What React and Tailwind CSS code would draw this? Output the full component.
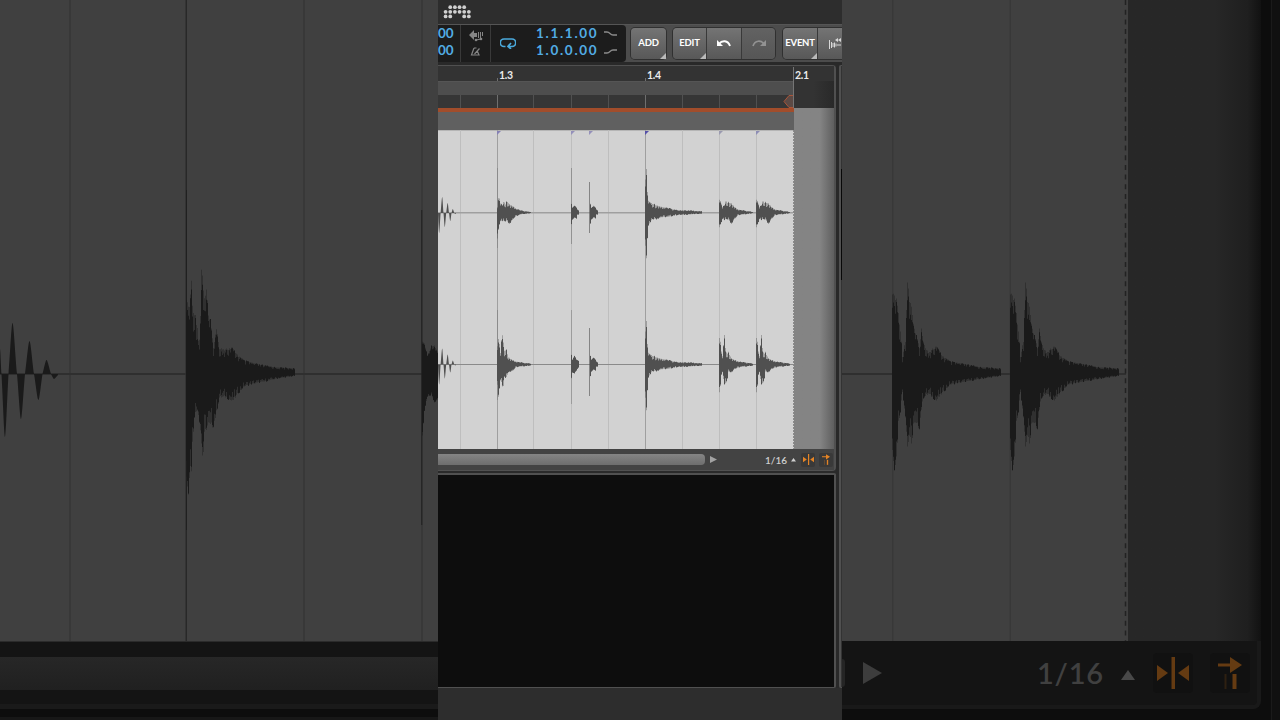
// ---------------------------------------------------------------------------
// Audio clip editor: transport bar, ruler, stereo waveform and footer,
// framed by an enlarged, dimmed view of the same clip on both sides.
// ---------------------------------------------------------------------------

// Envelopes are lists of [x, height above the axis, depth below the axis].
const SINE = [[0, 0, 6], [1.2, 0, 20], [2.6, 0, 0], [4.2, 16, 0], [5.5, 0, 0], [6.8, 0, 14], [8.2, 0, 0], [9.7, 10, 0], [11, 0, 0], [12.3, 0, 8], [13.5, 0, 0], [14.8, 4, 0], [16.3, 0, 0], [17.3, 0, 1], [18, 0, 0]];
const SNARE_TOP = [[0, 6, 28], [0.8, 15, 19], [2, 15, 12], [3, 10, 9], [5, 8, 9], [6.5, 13, 9], [8, 9, 9], [9.5, 13, 9], [12, 9, 12], [15, 7, 8], [19, 4, 4], [24, 2, 2], [30, 1, 1], [34, 0.5, 0.5]];
const SNARE_BOTTOM = [[0, 20, 22], [0.8, 28, 35], [2, 22, 24], [3.2, 11, 15], [4.5, 34, 22], [6, 24, 24], [7, 16, 13], [9, 16, 14], [11, 8, 8], [15, 5, 7], [19, 3, 3], [25, 2, 2], [34, 1, 1]];
const HAT_TOP = [[0, 9, 12], [1, 5, 7], [3, 7, 5], [5, 5, 6], [6, 3, 2], [7.5, 2, 2], [8, 1, 4]];
const HAT_BOTTOM = [[0, 10, 14], [1, 5, 8], [3, 9, 9], [5, 5, 6], [7, 4, 3], [8, 1, 1]];
const KICK = [[0, 36, 36], [1, 46, 47], [2, 22, 26], [3, 13, 14], [4, 11, 12], [7, 10, 7], [11, 8, 7], [16, 6, 5], [22, 5, 5], [30, 3, 3], [40, 2.4, 2.4], [57, 1.2, 1.2]];
const CLAP_TOP = [[0, 14, 16], [1.2, 12, 12], [3, 6, 7], [5, 8, 8], [6.5, 14, 7], [8, 11, 7], [10, 11, 9], [12, 10, 12], [15, 6, 7], [19, 3, 3], [25, 2, 2], [34, 0.5, 0.5]];
const CLAP_BOTTOM = [[0, 29, 30], [1, 24, 22], [2, 14, 10], [3, 9, 8], [4, 20, 16], [5, 31, 21], [6, 18, 21], [7.5, 12, 17], [9, 13, 8], [12, 7, 8], [15, 5, 5], [20, 3, 3], [34, 1, 1]];

const SIDE_SINE = [[0, 25, 0], [1.500, 0, 0], [5, 0, 63], [8.500, 0, 0], [12.5, 51, 0], [17, 0, 0], [21, 0, 45], [25, 0, 0], [29.5, 33, 0], [34, 0, 0], [38.5, 0, 26], [42.500, 0, 0], [46.5, 14, 0], [51, 0, 0], [54, 0, 5], [58, 0, 1]];
const SIDE_SNARE = [[0, 78, 110], [2, 70, 122], [3.5, 72, 100], [5, 96, 100], [6, 72, 75], [8, 64, 45], [11, 50, 38], [12.500, 26, 46], [14, 60, 60], [15, 112, 75], [16.5, 96, 92], [18, 80, 66], [20, 88, 58], [22, 60, 54], [24, 54, 56], [27, 28, 55], [30, 46, 42], [33, 27, 26], [39, 25, 25], [46, 26, 30], [52, 18, 21], [58, 13, 14], [68, 10, 11], [78, 8, 9], [90, 6, 6], [109, 5, 3]];
const SIDE_CLAP = [[0, 84, 82], [2, 82, 98], [4, 76, 90], [6, 64, 52], [8, 46, 40], [10, 18, 20], [13, 35, 45], [15, 98, 78], [17, 78, 66], [19, 72, 78], [21, 50, 54], [24, 38, 55], [27, 28, 57], [29, 46, 38], [31, 32, 26], [36, 22, 22], [44, 28, 29], [50, 18, 21], [58, 12, 12], [74, 9, 9], [90, 6, 6], [109, 5, 3]];
const SIDE_HAT = [[0, 32, 64], [2, 30, 38], [5, 18, 24], [9, 28, 22], [12, 28, 30], [16, 20, 26]];

function sample(env, x) {
  let i = 1;
  while (i < env.length - 1 && env[i][0] < x) i++;
  const [x0, u0, d0] = env[i - 1];
  const [x1, u1, d1] = env[i];
  const t = (x - x0) / (x1 - x0);
  return [u0 + (u1 - u0) * t, d0 + (d1 - d0) * t];
}

function noise(n) {
  const v = Math.sin(n * 12.9898) * 43758.5453;
  return v - Math.floor(v);
}

// One bar per pixel column. "rough" pulls columns towards the axis.
function columns(env, x, y, rough) {
  const end = env[env.length - 1][0];
  let d = "";
  for (let i = 0; i < end; i++) {
    const [up, down] = sample(env, i);
    const a = 1 - rough * noise(i + 3);
    const b = 1 - rough * noise(i + 71);
    const top = y - up * a;
    d += `M${x + i} ${top.toFixed(1)}h1V${(y + down * b).toFixed(1)}h-1z`;
  }
  return d;
}

function Burst({ env, x, y, rough = 0.5 }) {
  return (
    <g>
      <path d={columns(env, x, y, rough * 0.3)} opacity="0.4" />
      <path d={columns(env, x, y, rough)} />
    </g>
  );
}

// Rounded lobes for the low, pitched tail.
function Lobes({ env, x, y }) {
  let d = `M${x} ${y - env[0][1]}`;
  for (let i = 1; i < env.length; i++) {
    const [x0, u0, d0] = env[i - 1];
    const [x1, u1, d1] = env[i];
    const y0 = y - u0 + d0;
    const y1 = y - u1 + d1;
    const rising = Math.abs(y1 - y) > Math.abs(y0 - y);
    const w = x1 - x0;
    d += rising
      ? `C${x + x0 + w * 0.4} ${y0 + (y1 - y0) * 0.4} ${x + x1 - w * 0.25} ${y1} ${x + x1} ${y1}`
      : `C${x + x0 + w * 0.25} ${y0} ${x + x1 - w * 0.4} ${y1 - (y1 - y0) * 0.4} ${x + x1} ${y1}`;
  }
  return <path d={`${d}V${y}H${x}Z`} />;
}

function Magnet({ className }) {
  return (
    <svg viewBox="0 0 32 32" className={className} fill="currentColor">
      <path d="M0 8l11 8L0 24zM32 8l-11 8 11 8z" />
      <rect x="14.5" y="0" width="3.500" height="32" />
    </svg>
  );
}

function Follow({ className }) {
  return (
    <svg viewBox="0 0 24 32" className={className} fill="currentColor">
      <path d="M0 6.500h12V0l12 8-12 8V9.500H0z" />
      <rect x="14.500" y="17" width="4" height="15" />
      <rect x="6.500" y="17" width="2" height="15" opacity="0.35" />
    </svg>
  );
}

function LeftBackdrop() {
  return (
    <div className="w-[438px] h-full flex flex-col shrink-0 bg-[#141414]">
      <svg width="438" height="641" className="block bg-[#404040]">
        <g fill="#383838">
          <rect x="69" width="2" height="641" />
          <rect x="303" width="2" height="641" />
          <rect x="421" width="2" height="641" />
        </g>
        <rect x="185.500" width="1.500" height="641" fill="#282828" />
        <rect y="373" width="438" height="2" fill="#2f2f2f" />
        <g fill="#1a1a1a">
          <rect x="186" y="190" width="1" height="340" opacity="0.6" />
          <rect x="421" y="210" width="1.300" height="315" opacity="0.6" />
          <Lobes env={SIDE_SINE} x={0} y={374} />
          <Burst env={SIDE_SNARE} x={186} y={373} rough={0.4} />
          <Burst env={SIDE_HAT} x={422} y={373} rough={0.15} />
        </g>
      </svg>
      <div className="h-4 border-t border-[#2b2b2b]" />
      <div className="h-[33px] bg-linear-to-b from-[#272727] to-[#202020]" />
      <div className="h-[14px]" />
      <div className="h-[5px] bg-[#1a1a1a]" />
      <div className="h-2 bg-[#0d0d0d]" />
      <div className="flex-1 bg-[#171717]" />
    </div>
  );
}

function RightBackdrop() {
  return (
    <div className="w-[438px] h-full flex shrink-0 bg-[#0d0d0d]">
      <div className="w-[419px] flex flex-col">
        <div className="flex h-[641px]">
          <svg width="286" height="641" className="block bg-[#404040]">
            <g fill="#383838">
              <rect x="50" width="1.500" height="641" />
              <rect x="167.500" width="1.500" height="641" />
            </g>
            <rect y="373" width="284" height="2" fill="#2f2f2f" />
            <g fill="#1a1a1a">
              <Burst env={SIDE_CLAP} x={50} y={373} rough={0.4} />
              <Burst env={SIDE_CLAP} x={168} y={373} rough={0.4} />
            </g>
            <path d="M283.500 0V641" stroke="#222222" strokeWidth="1.500" strokeDasharray="5 4.700" />
          </svg>
          <div className="flex-1 bg-linear-to-r from-[#272727] from-65% via-[#1f1f1f] via-90% to-[#121212]" />
        </div>
        <div className="h-[68px] flex items-center rounded-br-lg border-r-4 border-b-4 border-[#191919] bg-[#141414]">
          <div className="w-[3px] h-7 rounded-r-md bg-[#252525]" />
          <svg viewBox="0 0 20 22" className="w-5 h-[22px] ml-[18px]" fill="#3d3d3d">
            <path d="M0 0l19 11L0 22z" />
          </svg>
          <span className="w-[66px] ml-[154px] text-[29px] leading-8 font-semibold tracking-[0.8px] whitespace-nowrap text-[#404040]">1/16</span>
          <svg viewBox="0 0 14 10" className="w-[14px] h-[10px] mt-1 ml-[18px]" fill="#484848">
            <path d="M7 0l7 10H0z" />
          </svg>
          <div className="size-10 ml-[18px] flex items-center justify-center rounded bg-[#111111]">
            <Magnet className="size-8 text-[#653b12]" />
          </div>
          <div className="size-10 ml-[17px] flex items-center justify-center rounded bg-[#111111]">
            <Follow className="w-6 h-8 text-[#653b12]" />
          </div>
        </div>
      </div>
      <div className="flex-1 flex justify-end">
        <div className="w-[9px] h-full border-l border-[#1a1a1a] bg-[#101010]" />
      </div>
    </div>
  );
}

const LOGO_ROWS = [
  [1, 2, 3, 4],
  [0, 1, 2, 3, 4, 5],
  [0, 1, 4, 5],
];

function Logo() {
  return (
    <svg width="28" height="14" fill="#d0d0d0">
      {LOGO_ROWS.map((row, r) =>
        row.map((c) => (
          <circle key={`${r}-${c}`} cx={2.6 + c * 4.65} cy={2.2 + r * 4.6} r="1.9" />
        ))
      )}
    </svg>
  );
}

function ToolButton({ children, className, menu }) {
  return (
    <button
      className={`relative h-[31px] flex items-center justify-center shrink-0 bg-linear-to-b from-[#747474] to-[#585858] text-[9.5px] font-bold tracking-tight text-white ${className}`}
    >
      {children}
      {menu && (
        <svg width="6" height="6" className="absolute right-0 bottom-0" fill="#b9b9b9">
          <path d="M6 0v6H0z" />
        </svg>
      )}
    </button>
  );
}

function Transport() {
  return (
    <div className="w-[188px] h-[37px] flex shrink-0 rounded-r bg-[#1c1c1c] text-[13.5px] leading-[17px] font-bold text-[#52ace4]">
      <div className="w-[22px] pb-[3px] flex flex-col justify-center">
        <span>00</span>
        <span>00</span>
      </div>
      <div className="w-[31px] flex flex-col items-center justify-center gap-[5px] pb-px border-x border-[#393939]">
        <svg width="14" height="12" fill="#858585">
          <path d="M0 5l5-5v3h3v4H5v3zM9 2h1v6H9zM11 2h1v6h-1zM13 2h1v4h-1z" />
          <circle cx="7" cy="10" r="1.300" />
          <circle cx="12" cy="9" r="1.300" />
          <path d="M7 9.500l5-1v1l-5 1z" />
        </svg>
        <svg width="11" height="9" fill="none" stroke="#858585" strokeWidth="1.200">
          <path d="M4 1L1.500 8H9L7.500 4.500M4 1h2.500M4.500 7l5-5.500" />
        </svg>
      </div>
      <div className="w-8 flex items-center justify-center pl-px pb-[2px]">
        <svg width="16" height="12" fill="none" stroke="#4aa9dc" strokeWidth="1.700">
          <path d="M5.500 9.500H4A3.500 3.500 0 0 1 4 2h8a3.500 3.500 0 0 1 0 7.500H8.500M11 6l-3 3.500 3 2.500" />
        </svg>
      </div>
      <div className="w-[67px] ml-[13px] pb-[3px] flex flex-col justify-center tracking-[1.7px] whitespace-nowrap">
        <span>1.1.1.00</span>
        <span>1.0.0.00</span>
      </div>
      <div className="flex flex-col justify-center gap-[13px] ml-[1px] pb-[2px]">
        <svg width="13" height="5" fill="none" stroke="#8a8a8a" strokeWidth="1.400">
          <path d="M0 1h3c3 0 3 3 6 3h4" />
        </svg>
        <svg width="13" height="5" fill="none" stroke="#8a8a8a" strokeWidth="1.400">
          <path d="M0 4h3c3 0 3-3 6-3h4" />
        </svg>
      </div>
    </div>
  );
}

function Toolbar() {
  return (
    <div className="h-[38px] flex items-center shrink-0 border-t border-[#555555] bg-[#4c4c4c]">
      <Transport />
      <ToolButton menu className="w-[35px] ml-[5px] rounded ring-1 ring-[#303030]">ADD</ToolButton>
      <div className="flex shrink-0 ml-[7px] rounded ring-1 ring-[#303030]">
        <ToolButton menu className="w-[34px] rounded-l border-r border-[#393939]">EDIT</ToolButton>
        <ToolButton className="w-[35px] border-r border-[#393939]">
          <svg width="16" height="9" fill="none" stroke="#ffffff" strokeWidth="1.900">
            <path d="M3 5c3-4 9-4 11 2" />
            <path d="M1 1v6h6z" fill="#ffffff" stroke="none" />
          </svg>
        </ToolButton>
        <ToolButton className="w-[33px] rounded-r from-[#626262]! to-[#565656]!">
          <svg width="16" height="9" fill="none" stroke="#929292" strokeWidth="1.700">
            <path d="M13 5C10 1 4 1 2 7" />
            <path d="M15 1v6H9z" fill="#929292" stroke="none" />
          </svg>
        </ToolButton>
      </div>
      <div className="flex shrink-0 ml-2 rounded-l ring-1 ring-[#303030]">
        <ToolButton menu className="w-[35px] rounded-l border-r border-[#393939]">EVENT</ToolButton>
        <ToolButton className="w-10 justify-start! pl-[11px]">
          <svg width="14" height="12" fill="#d8d8d8">
            <path d="M0 2h1v9H0zM2 4h1v6H2zM3.500 5h1v4h-1zM5 4.500h1v5H5zM6.500 5.500h1v3h-1zM8 6.500h4v1H8zM6 2l3-2v4zM9 2l3-2v4z" />
          </svg>
        </ToolButton>
      </div>
    </div>
  );
}

const BEATS = [59, 207];
const GRID = [22, 59, 95, 133, 170, 207, 244, 281, 318];

function Ruler() {
  return (
    <div className="relative h-[42px] shrink-0 text-[10.5px] leading-4 font-bold tracking-tight text-[#ececec]">
      <div className="h-[15px] bg-[#333333]" />
      <div className="flex">
        <div className="w-[355px]">
          <div className="h-[14px] border-t border-[#555555] bg-[#4e4e4e]" />
          <div className="h-[13px] bg-[#363636]" />
        </div>
        <div className="flex-1 h-[27px] bg-linear-to-r from-[#333333] from-50% to-[#292929]" />
      </div>
      <svg width="396" height="42" className="absolute inset-0">
        {GRID.map((x) => (
          <rect key={x} x={x} y="29" width="1" height="13" fill="#505050" />
        ))}
        {BEATS.map((x) => (
          <g key={x} fill="#6f6f6f">
            <rect x={x} y="12" width="1" height="3" />
            <rect x={x} y="29" width="1" height="13" />
          </g>
        ))}
        <rect x="355" y="1" width="1" height="41" fill="#757575" />
        <path d="M355 29.500h-4l-5 6 5 6h4" fill="#5c4a45" stroke="#a9553a" />
      </svg>
      <span className="absolute left-[61px] top-px">1.3</span>
      <span className="absolute left-[209px] top-px">1.4</span>
      <span className="absolute left-[357px] top-px">2.1</span>
    </div>
  );
}

const ONSETS = [
  { x: 59, color: "#8580b5" },
  { x: 133, color: "#9490ba" },
  { x: 151, color: "#9490ba" },
  { x: 207, color: "#5550a8" },
  { x: 281, color: "#9a9ab0" },
  { x: 318, color: "#8d8db5" },
];

function Waveform() {
  return (
    <div className="flex flex-1">
      <div className="w-[356px]">
        <div className="h-1 bg-[#a24d2b]" />
        <div className="h-[18px] bg-[#606060]" />
        <svg width="356" height="319" className="block bg-[#d2d2d2]">
          <rect width="356" height="1" fill="#b5b5b5" />
          {GRID.map((x) => (
            <rect key={x} x={x} width="1" height="319" fill="#bebebe" />
          ))}
          {BEATS.map((x) => (
            <rect key={x} x={x} width="1" height="319" fill="#9f9f9f" />
          ))}
          {ONSETS.map((o) => (
            <path key={o.x} d={`M${o.x} 1h4l-4 4z`} fill={o.color} />
          ))}
          <rect y="82" width="355" height="1.500" fill="#9f9f9f" />
          <rect y="234" width="355" height="1" fill="#8a8a8a" />
          <g fill="#505050">
            <rect x="59" y="38" width="1" height="80" opacity="0.25" />
            <rect x="133" y="38" width="1" height="76" opacity="0.4" />
            <rect x="151" y="52" width="1" height="51" opacity="0.6" />
            <rect x="59" y="180" width="1" height="90" opacity="0.25" />
            <rect x="133" y="180" width="1" height="94" opacity="0.3" />
            <rect x="151" y="198" width="1" height="68" opacity="0.6" />
            <Lobes env={SINE} x={0} y={83} />
            <Burst env={SNARE_TOP} x={59} y={82.5} />
            <Burst env={HAT_TOP} x={133} y={82.5} rough={0.1} />
            <Burst env={HAT_TOP} x={152} y={82.5} rough={0.2} />
            <Burst env={KICK} x={207} y={82.5} />
            <Burst env={CLAP_TOP} x={281} y={82.5} />
            <Burst env={CLAP_TOP} x={318} y={82.5} />
            <Lobes env={SINE} x={0} y={234.5} />
            <Burst env={SNARE_BOTTOM} x={59} y={234.5} />
            <Burst env={HAT_BOTTOM} x={133} y={234.5} rough={0.1} />
            <Burst env={HAT_TOP} x={152} y={234.5} rough={0.1} />
            <Burst env={KICK} x={207} y={234.5} />
            <Burst env={CLAP_BOTTOM} x={281} y={234.5} />
            <Burst env={CLAP_BOTTOM} x={318} y={234.5} />
          </g>
          <path d="M355.500 0V319" stroke="#8a8a8a" strokeDasharray="2 1" />
        </svg>
      </div>
      <div className="flex-1 bg-linear-to-r from-[#848484] from-65% to-[#5f5f5f]" />
    </div>
  );
}

function Footer() {
  return (
    <div className="h-[21px] flex items-center shrink-0 bg-[#434343]">
      <div className="w-[267px] h-[11px] shrink-0 rounded-r bg-linear-to-b from-[#858585] to-[#6e6e6e]" />
      <svg width="7" height="7" className="ml-[5px] shrink-0" fill="#a2a2a2">
        <path d="M0 0l7 3.500L0 7z" />
      </svg>
      <span className="w-[22px] shrink-0 ml-[48px] text-[10px] leading-4 font-semibold whitespace-nowrap text-[#cfcfcf]">1/16</span>
      <svg width="5" height="4" className="ml-[4px] shrink-0" fill="#cfcfcf">
        <path d="M2.500 0L5 3.500H0z" />
      </svg>
      <div className="size-[14px] ml-[5px] flex items-center justify-center shrink-0 rounded-xs bg-[#393939]">
        <Magnet className="size-[11px] text-[#e58425]" />
      </div>
      <div className="size-[14px] ml-[4px] flex items-center justify-center shrink-0 rounded-xs bg-[#393939]">
        <Follow className="w-2 h-[11px] text-[#e58425]" />
      </div>
    </div>
  );
}

function Editor() {
  return (
    <div className="w-[404px] h-full flex flex-col shrink-0 overflow-hidden bg-[#2d2d2d]">
      <div className="h-6 flex items-center pl-[5px] shrink-0">
        <Logo />
      </div>
      <Toolbar />
      <div className="h-[3px] shrink-0 bg-[#292929]" />
      <div className="flex h-[623px]">
        <div className="w-[398px] flex flex-col">
          <div className="h-[406px] flex flex-col rounded-tr rounded-br border-t border-r-2 border-b-2 border-[#505050]">
            <Ruler />
            <Waveform />
            <Footer />
          </div>
          <div className="h-[2px] bg-[#2a2a2a]" />
          <div className="flex-1 rounded-r-xs border-t-2 border-r-2 border-b border-[#505050] bg-[#0d0d0d]" />
        </div>
        <div className="w-[3px] bg-[#292929]" />
        <div className="w-[3px] flex flex-col rounded-l-xs border-l-2 border-y border-[#505050] bg-[#333333]">
          <div className="h-[103px]" />
          <div className="h-[111px] bg-[#080808]" />
        </div>
      </div>
    </div>
  );
}

export default function App() {
  return (
    <div className="w-[1280px] h-[720px] flex overflow-hidden bg-[#141414] font-['Lato',sans-serif]">
      <LeftBackdrop />
      <Editor />
      <RightBackdrop />
    </div>
  );
}
